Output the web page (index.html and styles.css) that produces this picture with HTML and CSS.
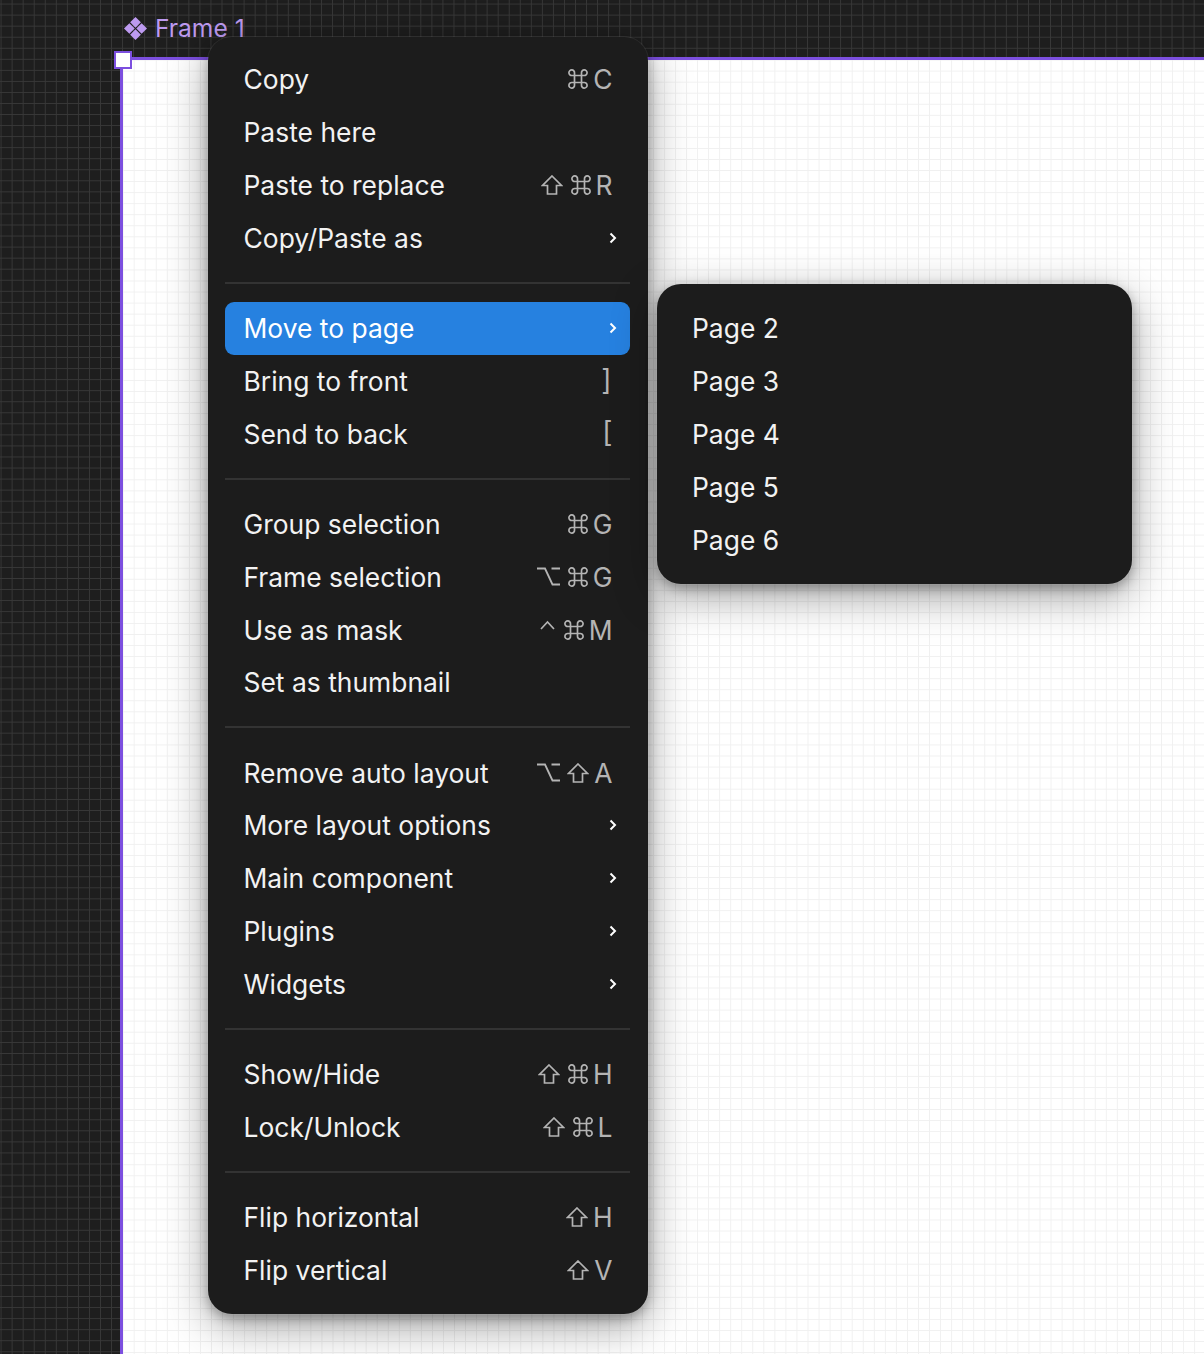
FILE: index.html
```html
<!DOCTYPE html>
<html lang="en">
<head>
<meta charset="utf-8">
<title>Frame context menu</title>
<link rel="stylesheet" href="styles.css">
</head>
<body>
<svg class="defs" width="0" height="0" aria-hidden="true">
  <symbol id="cmd" viewBox="0 0 20 20"><path d="M6.5 6.5h7v7h-7zM6.5 6.5H4a2.8 2.8 0 1 1 2.5-2.5zM13.5 6.5V4A2.8 2.8 0 1 1 16 6.5zM13.5 13.5H16a2.8 2.8 0 1 1-2.5 2.5zM6.5 13.5V16A2.8 2.8 0 1 1 4 13.5z" fill="none" stroke="currentColor" stroke-width="1.7"/></symbol>
  <symbol id="shift" viewBox="0 0 22 20"><path d="M11 1 L20.5 10.5 H15.5 V19 H6.5 V10.5 H1.5 Z" fill="none" stroke="currentColor" stroke-width="1.7" stroke-linejoin="miter"/></symbol>
  <symbol id="opt" viewBox="0 0 23 19"><path d="M0 1.5H8L15.5 17.5H23M14.5 1.5H23" fill="none" stroke="currentColor" stroke-width="1.8"/></symbol>
  <symbol id="ctrl" viewBox="0 0 15 10"><path d="M1 9L7.5 2L14 9" fill="none" stroke="currentColor" stroke-width="1.7"/></symbol>
  <symbol id="chev" viewBox="0 0 8 12"><path d="M1.5 1.5L6 6L1.5 10.5" fill="none" stroke="currentColor" stroke-width="2"/></symbol>
</svg>

<main class="canvas">
  <div class="frame-label">
    <svg class="comp-icon" viewBox="0 0 24 24" aria-hidden="true"><path d="M12 0L17.6 5.6L12 11.2L6.4 5.6ZM18.4 6.4L24 12L18.4 17.6L12.8 12ZM5.6 6.4L11.2 12L5.6 17.6L0 12ZM12 12.8L17.6 18.4L12 24L6.4 18.4Z" fill="currentColor"/></svg>
    <span>Frame 1</span>
  </div>
  <div class="frame"><span class="handle"></span></div>

  <nav class="menu main-menu">
    <div class="item"><span>Copy</span><span class="keys"><svg class="i-cmd"><use href="#cmd"/></svg><b>C</b></span></div>
    <div class="item"><span>Paste here</span></div>
    <div class="item"><span>Paste to replace</span><span class="keys"><svg class="i-shift"><use href="#shift"/></svg><svg class="i-cmd"><use href="#cmd"/></svg><b>R</b></span></div>
    <div class="item"><span>Copy/Paste as</span><svg class="i-chev"><use href="#chev"/></svg></div>
    <hr class="sep">
    <div class="item active"><span>Move to page</span><svg class="i-chev"><use href="#chev"/></svg></div>
    <div class="item"><span>Bring to front</span><span class="keys"><b class="close-bracket">]</b></span></div>
    <div class="item"><span>Send to back</span><span class="keys"><b class="open-bracket">[</b></span></div>
    <hr class="sep">
    <div class="item"><span>Group selection</span><span class="keys"><svg class="i-cmd"><use href="#cmd"/></svg><b>G</b></span></div>
    <div class="item"><span>Frame selection</span><span class="keys"><svg class="i-opt"><use href="#opt"/></svg><svg class="i-cmd"><use href="#cmd"/></svg><b>G</b></span></div>
    <div class="item"><span>Use as mask</span><span class="keys"><svg class="i-ctrl"><use href="#ctrl"/></svg><svg class="i-cmd"><use href="#cmd"/></svg><b>M</b></span></div>
    <div class="item"><span>Set as thumbnail</span></div>
    <hr class="sep">
    <div class="item"><span>Remove auto layout</span><span class="keys"><svg class="i-opt"><use href="#opt"/></svg><svg class="i-shift"><use href="#shift"/></svg><b>A</b></span></div>
    <div class="item"><span>More layout options</span><svg class="i-chev"><use href="#chev"/></svg></div>
    <div class="item"><span>Main component</span><svg class="i-chev"><use href="#chev"/></svg></div>
    <div class="item"><span>Plugins</span><svg class="i-chev"><use href="#chev"/></svg></div>
    <div class="item"><span>Widgets</span><svg class="i-chev"><use href="#chev"/></svg></div>
    <hr class="sep">
    <div class="item"><span>Show/Hide</span><span class="keys"><svg class="i-shift"><use href="#shift"/></svg><svg class="i-cmd"><use href="#cmd"/></svg><b>H</b></span></div>
    <div class="item"><span>Lock/Unlock</span><span class="keys"><svg class="i-shift"><use href="#shift"/></svg><svg class="i-cmd"><use href="#cmd"/></svg><b>L</b></span></div>
    <hr class="sep">
    <div class="item"><span>Flip horizontal</span><span class="keys"><svg class="i-shift"><use href="#shift"/></svg><b>H</b></span></div>
    <div class="item"><span>Flip vertical</span><span class="keys"><svg class="i-shift"><use href="#shift"/></svg><b>V</b></span></div>
  </nav>

  <nav class="menu sub-menu">
    <div class="item"><span>Page 2</span></div>
    <div class="item"><span>Page 3</span></div>
    <div class="item"><span>Page 4</span></div>
    <div class="item"><span>Page 5</span></div>
    <div class="item"><span>Page 6</span></div>
  </nav>
</main>
</body>
</html>
```

FILE: styles.css
```css
* { box-sizing: border-box; }
html, body { margin: 0; height: 100%; }
body { overflow: hidden; background: #1e1e1e; font-family: Inter, "Liberation Sans", sans-serif; }
.defs { position: absolute; }

.canvas {
  position: relative;
  width: 1204px;
  height: 1354px;
  overflow: hidden;
  background-color: #1e1e1e;
  background-image:
    linear-gradient(to right, #383838 1.2px, transparent 1.2px),
    linear-gradient(to bottom, #383838 1.2px, transparent 1.2px);
  background-size: 11.06px 11.06px;
  background-position: 0.6px 3.6px;
}

.frame-label {
  position: absolute;
  left: 124px;
  top: 13px;
  display: flex;
  align-items: center;
  gap: 8px;
  color: #bd9af0;
  font-size: 24.6px;
  line-height: 30px;
}
.comp-icon { width: 23px; height: 23px; }

.frame {
  position: absolute;
  left: 120px;
  top: 57px;
  width: 1084px;
  height: 1297px;
  border-top: 3px solid #7c4fdf;
  border-left: 3px solid #7c4fdf;
  background-color: #fff;
  background-image:
    linear-gradient(to right, #f0f0f0 1.2px, transparent 1.2px),
    linear-gradient(to bottom, #f0f0f0 1.2px, transparent 1.2px);
  background-size: 11.06px 11.06px;
  background-position: 10.7px 10.65px;
}
.handle {
  position: absolute;
  left: -9px;
  top: -9px;
  width: 18px;
  height: 18px;
  background: #fff;
  border: 2.5px solid #7c4fdf;
}

.menu {
  position: absolute;
  background: #1c1c1c;
  color: #f2f2f2;
  border-radius: 24px;
  box-shadow: 0 0 0 1px rgba(255,255,255,.08), 0 12px 44px rgba(0,0,0,.38), 0 4px 12px rgba(0,0,0,.3);
  font-size: 26.4px;
  letter-spacing: .02px;
}
.main-menu { left: 208px; top: 37px; width: 440px; padding: 16px 18px 17.6px 17px; }
.sub-menu { left: 657px; top: 284px; width: 475px; padding: 18px 17px; }

.item {
  display: flex;
  align-items: center;
  justify-content: space-between;
  height: 52.85px;
  padding: 0 17.5px 0 18.5px;
  border-radius: 9px;
  white-space: nowrap;
}
.sub-menu .item { padding-left: 18px; }
.active { background: #2681e0; color: #fff; }

.sep {
  height: 2px;
  margin: 17.65px 0;
  border: 0;
  background: #333;
}

.keys {
  display: flex;
  align-items: center;
  gap: 7.5px;
  color: #b4b4b4;
}
.keys b { font-weight: 400; letter-spacing: 0; margin-left: -2.5px; }
.keys svg { display: block; flex: none; }
.keys .open-bracket { margin-bottom: 4px; font-size: 28px; }
.keys .close-bracket { margin-right: 1px; margin-bottom: 2px; font-size: 28px; }
.i-cmd { width: 20px; height: 20px; }
.i-shift { width: 22px; height: 20px; }
.i-opt { width: 23px; height: 19px; }
.i-ctrl { width: 15px; height: 10px; margin: 0 1.5px 10px 0; }
.i-chev { width: 8px; height: 12px; margin-right: -4px; color: #fff; }
```
